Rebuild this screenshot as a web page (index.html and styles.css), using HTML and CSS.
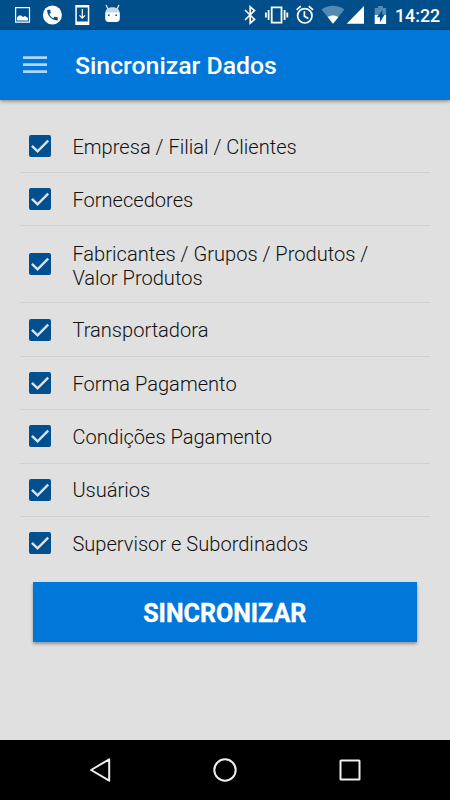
FILE: index.html
```html
<!DOCTYPE html>
<html lang="pt-BR">
<head>
<meta charset="utf-8">
<title>Sincronizar Dados</title>
<link rel="stylesheet" href="styles.css">
</head>
<body>
<div class="screen">
  <div class="status">
    <div class="status-group">
      <svg width="30" height="30" viewBox="7 0 30 30"><path fill="none" stroke="#fff" stroke-width="1.2" d="M15.6 7.6h13.9v14.6H15.6z"/><path fill="#fff" d="M17 20.5v-3l2-2h2l2 1.4 2-1 3 2v2.6z"/></svg>
      <svg width="30" height="30" viewBox="37 0 30 30"><circle cx="52.4" cy="15" r="9.5" fill="#fff"/><path fill="#004f8b" transform="translate(45.4 8) scale(.59)" d="M6.62 10.79c1.44 2.83 3.76 5.14 6.59 6.59l2.2-2.2c.27-.27.67-.36 1.02-.24 1.12.37 2.33.57 3.57.57.55 0 1 .45 1 1V20c0 .55-.45 1-1 1C10.61 21 3 13.39 3 4c0-.55.45-1 1-1h3.5c.55 0 1 .45 1 1 0 1.25.2 2.45.57 3.57.11.35.03.74-.25 1.02z"/></svg>
      <svg width="30" height="30" viewBox="67 0 30 30"><path fill="#fff" fill-rule="evenodd" d="M75.3 5h14v20h-14zM76.8 7.6v13.9h11V7.6z"/><path fill="none" stroke="#fff" stroke-width="1.2" d="M82.3 9v9M79.5 15.4l2.8 2.8 2.8-2.8"/></svg>
      <svg width="30" height="30" viewBox="97 0 30 30"><path fill="none" stroke="#fff" stroke-width="1.1" d="M106 5l2 4M119 5l-2 4"/><path fill="#c4d9e8" d="M105.4 13c0-3.6 2.8-5.7 7.1-5.7s7.1 2.1 7.1 5.7z"/><path fill="#fff" d="M105.2 12.4h14.6v6.4c0 2-1.3 3.2-3.2 3.2h-8.2c-1.9 0-3.2-1.2-3.2-3.2z"/><path fill="#004f8b" d="M108 14.4h1.6V16H108zM115.4 14.4h1.6V16h-1.6z"/></svg>
    </div>
    <div class="status-group">
      <svg width="26" height="30" viewBox="237 0 26 30"><path fill="none" stroke="#fff" stroke-width="1.7" d="M245 10l9.5 9.5-4.3 3.7V6.8l4.3 3.7L245 20"/></svg>
      <svg width="27" height="30" viewBox="263 0 27 30"><path fill="none" stroke="#fff" stroke-width="1.8" d="M271.7 7.4h9.8v15.2h-9.8zM268.6 10v10M284.6 10v10M265.9 12.4v5.2M287.3 12.4v5.2"/></svg>
      <svg width="30" height="30" viewBox="290 0 30 30"><g fill="none" stroke="#fff" stroke-width="1.7"><circle cx="304.8" cy="15.8" r="7.2"/><path d="M296.6 9.8l4.2-3.6M313 9.8l-4.2-3.6M304.4 11.2v5l3.9 2.3"/></g></svg>
      <svg width="26" height="30" viewBox="320 0 26 30"><path fill="#5489b1" d="M321.6 9.5c6.6-5 16.2-5 22.8 0L333 23.7z"/><path fill="#fff" d="M327.6 17c3-2.1 7.8-2.1 10.8 0L333 23.7z"/></svg>
      <svg width="21" height="30" viewBox="346 0 21 30"><path fill="#fff" d="M346.7 23.7L364 6v17.7z"/></svg>
      <svg width="28" height="30" viewBox="367 0 28 30"><path fill="#5489b1" d="M374.7 8h3.2V6h5v2h3.2v7h-11.4z"/><path fill="#fff" d="M374.7 15h11.4v9h-11.4z"/><path fill="#004f8b" d="M382.3 10.2v4.6h2.2l-4.5 7.5v-5.1h-3.2z"/></svg>
      <span class="clock">14:22</span>
    </div>
  </div>
  <header class="appbar">
    <svg class="menu" width="24" height="18" viewBox="0 0 24 18"><path fill="#b3d5f4" d="M0 .2h24v2.7H0zM0 7.2h24v2.7H0zM0 14.2h24v2.7H0z"/></svg>
    <h1 class="title">Sincronizar Dados</h1>
  </header>
  <main class="content">
    <ul class="list">
      <li class="row"><svg class="check" viewBox="0 0 18 18"><rect width="18" height="18" rx="1.6"/><path d="M2.4 8.8l4.6 4.5 8.7-8.7"/></svg><span class="label">Empresa / Filial / Clientes</span></li>
      <li class="row"><svg class="check" viewBox="0 0 18 18"><rect width="18" height="18" rx="1.6"/><path d="M2.4 8.8l4.6 4.5 8.7-8.7"/></svg><span class="label">Fornecedores</span></li>
      <li class="row row-tall"><svg class="check" viewBox="0 0 18 18"><rect width="18" height="18" rx="1.6"/><path d="M2.4 8.8l4.6 4.5 8.7-8.7"/></svg><span class="label">Fabricantes / Grupos / Produtos /<br>Valor Produtos</span></li>
      <li class="row"><svg class="check" viewBox="0 0 18 18"><rect width="18" height="18" rx="1.6"/><path d="M2.4 8.8l4.6 4.5 8.7-8.7"/></svg><span class="label">Transportadora</span></li>
      <li class="row"><svg class="check" viewBox="0 0 18 18"><rect width="18" height="18" rx="1.6"/><path d="M2.4 8.8l4.6 4.5 8.7-8.7"/></svg><span class="label">Forma Pagamento</span></li>
      <li class="row"><svg class="check" viewBox="0 0 18 18"><rect width="18" height="18" rx="1.6"/><path d="M2.4 8.8l4.6 4.5 8.7-8.7"/></svg><span class="label">Condições Pagamento</span></li>
      <li class="row"><svg class="check" viewBox="0 0 18 18"><rect width="18" height="18" rx="1.6"/><path d="M2.4 8.8l4.6 4.5 8.7-8.7"/></svg><span class="label">Usuários</span></li>
      <li class="row"><svg class="check" viewBox="0 0 18 18"><rect width="18" height="18" rx="1.6"/><path d="M2.4 8.8l4.6 4.5 8.7-8.7"/></svg><span class="label">Supervisor e Subordinados</span></li>
    </ul>
    <button class="sync" type="button">SINCRONIZAR</button>
  </main>
  <nav class="navbar">
    <svg width="26" height="26" viewBox="0 0 26 26"><path d="M22.2 2.3v21.4L4.1 13z"/></svg>
    <svg width="26" height="26" viewBox="0 0 26 26"><circle cx="13" cy="13" r="10.7"/></svg>
    <svg width="26" height="26" viewBox="0 0 26 26"><rect x="3.5" y="3.5" width="19" height="19" rx=".5"/></svg>
  </nav>
</div>
</body>
</html>
```
FILE: styles.css
```css
* { box-sizing: border-box; }
body { margin: 0; font-family: Roboto, "Noto Sans", sans-serif; }
svg { display: block; flex: none; }

.screen {
  display: flex;
  flex-direction: column;
  width: 450px;
  height: 800px;
  overflow: hidden;
  background: #e0e0e0;
}

.status {
  display: flex;
  justify-content: space-between;
  flex: none;
  height: 30px;
  padding: 0 10px 0 7px;
  background: #004f8b;
}
.status-group { display: flex; align-items: center; }
.clock {
  width: 45px;
  padding-top: 2px;
  color: #fff;
  font-size: 17.8px;
  font-weight: 500;
  line-height: 30px;
  text-align: center;
  white-space: nowrap;
}

.appbar {
  display: flex;
  align-items: center;
  flex: none;
  height: 70px;
  padding-left: 23px;
  background: #0077d9;
  box-shadow: 0 1px 4px rgba(0, 0, 0, .45);
}
.title {
  margin: 2px 0 0 28px;
  color: #fff;
  font-size: 24.8px;
  font-weight: 500;
  line-height: 32px;
}

.content {
  display: flex;
  flex-direction: column;
  flex: 1;
  padding: 19.8px 20px 0;
}
.list { margin: 0; padding: 0; list-style: none; }
.row {
  display: flex;
  align-items: center;
  height: 53.35px;
  padding-left: 9px;
  border-bottom: 1px solid #d0d0d0;
}
.row-tall { height: 77px; }
.row:last-child { border-bottom-color: transparent; }
.check { width: 22px; height: 22px; fill: #004f8f; }
.check path { fill: none; stroke: #e0e0e0; stroke-width: 2; }
.label {
  margin: 1.6px 0 0 21.4px;
  color: #111;
  font-size: 20.08px;
  font-weight: 300;
  line-height: 24px;
}
.row-tall .label { margin-top: 2.4px; }

.sync {
  height: 60px;
  margin: 12px 13px 0 12.5px;
  padding: 2px 0 0;
  border: 0;
  background: #0077d9;
  box-shadow: 0 2px 3px rgba(0, 0, 0, .35);
  color: #fff;
  font-family: inherit;
  font-size: 25px;
  font-weight: 700;
  -webkit-text-stroke: .4px #fff;
}

.navbar {
  display: flex;
  align-items: center;
  justify-content: center;
  gap: 99px;
  flex: none;
  height: 60px;
  background: #000;
}
.navbar svg {
  fill: none;
  stroke: #eee;
  stroke-width: 2;
  stroke-linejoin: round;
}
```
